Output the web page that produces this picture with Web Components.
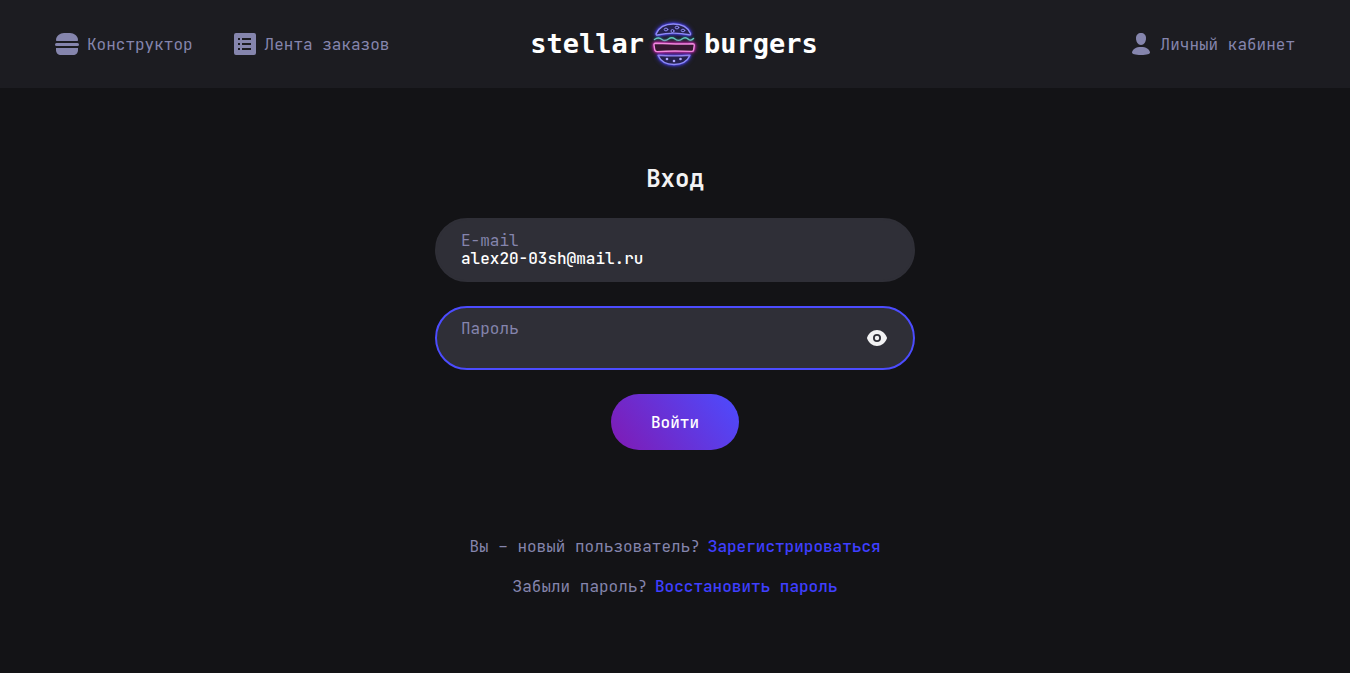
<!DOCTYPE html>
<html lang="ru">
<head>
<meta charset="utf-8">
<meta name="viewport" content="width=device-width, initial-scale=1">
<title>Stellar Burgers</title>
<style>
  html { height: 100%; }
  body {
    margin: 0;
    min-height: 100%;
    background: #131316;
    color: #f2f2f3;
    font: 400 16px/24px "JetBrains Mono", "DejaVu Sans Mono", monospace;
    --surface: #1c1c21;
    --field: #2f2f37;
    --accent: #4c4cff;
    --link: #3f3fff;
    --muted: #8585ad;
  }
</style>
</head>
<body>
<burger-app></burger-app>

<script>
  class BaseElement extends HTMLElement {
    constructor() {
      super();
      this.attachShadow({ mode: "open" });
    }
    connectedCallback() {
      this.shadowRoot.innerHTML = this.render();
    }
  }

  customElements.define("nav-item", class extends BaseElement {
    render() {
      const icons = {
        burger: `<path d="M1 8C1 4 5 1 9 1h6c4 0 8 3 8 7 0 .7-.3 1-1 1H2c-.7 0-1-.3-1-1z"/><rect x="0" y="11" width="24" height="3" rx="1.500"/><path d="M1 16h22v2c0 3-2 5-5 5H6c-3 0-5-2-5-5z"/>`,
        list: `<path fill-rule="evenodd" d="M3 1h18a2 2 0 0 1 2 2v18a2 2 0 0 1-2 2H3a2 2 0 0 1-2-2V3a2 2 0 0 1 2-2zM5 6v2h2V6zM9 6v2h9V6zM5 11v2h2v-2zM9 11v2h9v-2zM5 16v2h2v-2zM9 16v2h9v-2z"/>`,
        profile: `<path d="M12 1c3 0 5 2 5 5 0 4-2 7-5 7S7 10 7 6c0-3 2-5 5-5z"/><path d="M3 20.500C3.500 17 7 15 12 15s8.500 2 9 5.500C21 22 18 23 12 23s-9-1-9-2.500z"/>`
      };
      return `<style>
        :host { display: block; }
        a { display: flex; align-items: center; gap: 8px; padding: 16px 0; color: var(--muted); text-decoration: none; white-space: nowrap; }
        svg { flex: none; fill: currentColor; }
        span { padding-top: 2px; }
      </style>
      <a href="${this.getAttribute("href")}"><svg width="24" height="24" viewBox="0 0 24 24" aria-hidden="true">${icons[this.getAttribute("icon")]}</svg><span><slot></slot></span></a>`;
    }
  });

  customElements.define("brand-logo", class extends BaseElement {
    render() {
      return `<style>
        :host { display: block; }
        a { display: grid; grid-template-columns: 114px 48px 116px; gap: 6px; align-items: center; color: #fff; text-decoration: none; font: 700 27px/32px "DejaVu Sans Mono", monospace; }
        .left { text-align: right; }
        svg { fill: none; stroke-width: 1.400; stroke-linecap: round; stroke-linejoin: round; overflow: visible; }
        .bun { stroke: #8f8cf5; fill: #25214f; filter: drop-shadow(0 0 1px #5148ff) drop-shadow(0 0 2px #3d35d0); }
        .bun circle, .bun ellipse { fill: none; stroke-width: 1; }
        .bun .dot { fill: #b0a8ff; stroke: none; }
        .salad { stroke: #62cdbd; filter: drop-shadow(0 0 1px #217d78); }
        .patty { stroke: #f08ade; fill: #35172f; filter: drop-shadow(0 0 1px #d52fc0) drop-shadow(0 0 2px #b020a0); }
      </style>
      <a href="#home">
        <span class="left">stellar</span>
        <svg width="48" height="48" viewBox="5 5 48 48" aria-hidden="true">
          <g class="bun">
            <path d="M11.200 18.600C14 12.300 20 9 28.300 9c8 0 14.700 3.500 17.200 9.600.4 1-.3 1.500-1.300 1.200C34 17.600 23 17.600 12.500 20c-1 .2-1.700-.4-1.300-1.400z"/>
            <ellipse cx="21" cy="14.500" rx="1.800" ry="1.400"/><circle cx="27.500" cy="16" r="1.500"/>
            <ellipse cx="32" cy="12.500" rx="1.800" ry="1.400"/><ellipse cx="38" cy="15.500" rx="1.800" ry="1.300"/>
            <path d="M13 40.300c10 .8 21 .8 32 0C42.500 46 37 49.500 29 49.500S15.500 46 13 40.300z"/>
            <circle class="dot" cx="22" cy="44" r="1.300"/><circle class="dot" cx="29" cy="46" r="1.300"/><circle class="dot" cx="35.500" cy="44" r="1.300"/>
          </g>
          <path class="salad" d="M9.500 24.500c2.500-2 5-2 7.500 0s4 1.500 6.500-.5 4-2 6.500 0 4.500 2 7 0 4-2 6 0 4 1 5.500-.5"/>
          <path class="patty" d="M10.500 28.300c12 .6 24 1.200 37 .5 1.300 0 2 .6 1.700 2l-.6 4c-.2 1.200-1 1.600-2 1.600-11-.5-23-.6-34.500.2-1.300 0-2-.5-2.300-1.600l-.8-5c-.1-1.100.4-1.700 1.500-1.700z"/>
        </svg>
        <span>burgers</span>
      </a>`;
    }
  });

  customElements.define("app-header", class extends BaseElement {
    render() {
      return `<style>
        :host { display: block; background: var(--surface); }
        header { display: grid; grid-template-columns: 1fr auto 1fr; align-items: center; min-height: 88px; max-width: 1240px; margin: 0 auto; }
        nav { display: flex; gap: 40px; }
        .account { justify-self: end; }
      </style>
      <header>
        <nav>
          <nav-item icon="burger" href="#constructor">Конструктор</nav-item>
          <nav-item icon="list" href="#feed">Лента заказов</nav-item>
        </nav>
        <brand-logo></brand-logo>
        <nav-item class="account" icon="profile" href="#profile">Личный кабинет</nav-item>
      </header>`;
    }
  });

  customElements.define("form-field", class extends BaseElement {
    render() {
      const type = this.getAttribute("type");
      return `<style>
        :host { display: block; }
        .box { display: flex; align-items: center; gap: 12px; box-sizing: border-box; min-height: 64px; padding: 0 24px; border: 2px solid var(--field); border-radius: 32px; background: var(--field); }
        :host([active]) .box { border-color: var(--accent); }
        .text { flex: 1; display: flex; flex-direction: column; min-width: 0; }
        label { color: var(--muted); line-height: 18px; }
        input { height: 18px; padding: 0; border: 0; outline: 0; background: none; color: #fff; font: inherit; font-weight: 500; line-height: 18px; }
        button { display: flex; padding: 0; border: 0; background: none; color: #f2f2f3; cursor: pointer; }
      </style>
      <div class="box">
        <div class="text">
          <label for="control">${this.getAttribute("label")}</label>
          <input id="control" type="${type}" value="${this.getAttribute("value") || ""}">
        </div>
        ${type === "password" ? `<button type="button" aria-label="Показать пароль"><svg width="24" height="24" viewBox="0 0 24 24" fill="currentColor" aria-hidden="true"><path fill-rule="evenodd" d="M2.300 11C4 7 7.500 4 12 4s8 3 9.700 7c.4.800.4 1.200 0 2-1.700 4-5.200 7-9.700 7s-8-3-9.700-7c-.4-.8-.4-1.200 0-2zM12 8a4 4 0 1 0 0 8 4 4 0 0 0 0-8zm0 1.800a2.200 2.200 0 1 1 0 4.400 2.200 2.200 0 0 1 0-4.400z"/></svg></button>` : ""}
      </div>`;
    }
  });

  customElements.define("primary-button", class extends BaseElement {
    render() {
      return `<style>
        :host { display: block; }
        button { min-height: 56px; padding: 18px 40px 16px; border: 0; border-radius: 28px; background: linear-gradient(54deg, #801ab3 0%, #4c4cff 100%); color: #fff; font: inherit; font-weight: 500; line-height: 22px; cursor: pointer; }
      </style>
      <button type="button"><slot></slot></button>`;
    }
  });

  customElements.define("hint-line", class extends BaseElement {
    render() {
      return `<style>
        :host { display: flex; flex-wrap: wrap; justify-content: center; gap: 8px; color: var(--muted); }
        a { color: var(--link); font-weight: 500; text-decoration: none; }
      </style>
      <span><slot></slot></span><a href="${this.getAttribute("href")}">${this.getAttribute("action")}</a>`;
    }
  });

  customElements.define("login-form", class extends BaseElement {
    render() {
      return `<style>
        :host { display: block; max-width: 480px; margin: 0 auto; padding: 76px 0; }
        form { display: flex; flex-direction: column; gap: 24px; }
        h1 { margin: 0; text-align: center; font-size: 24px; line-height: 30px; }
        primary-button { align-self: center; }
        .hints { display: grid; gap: 16px; margin-top: 85px; }
      </style>
      <form>
        <h1>Вход</h1>
        <form-field label="E-mail" type="email" value="alex20-03sh@mail.ru"></form-field>
        <form-field label="Пароль" type="password" active></form-field>
        <primary-button>Войти</primary-button>
      </form>
      <div class="hints">
        <hint-line href="#register" action="Зарегистрироваться">Вы – новый пользователь?</hint-line>
        <hint-line href="#forgot" action="Восстановить пароль">Забыли пароль?</hint-line>
      </div>`;
    }
  });

  customElements.define("burger-app", class extends BaseElement {
    render() {
      return `<style>:host, main { display: block; }</style>
      <app-header></app-header>
      <main><login-form></login-form></main>`;
    }
  });
</script>
</body>
</html>
